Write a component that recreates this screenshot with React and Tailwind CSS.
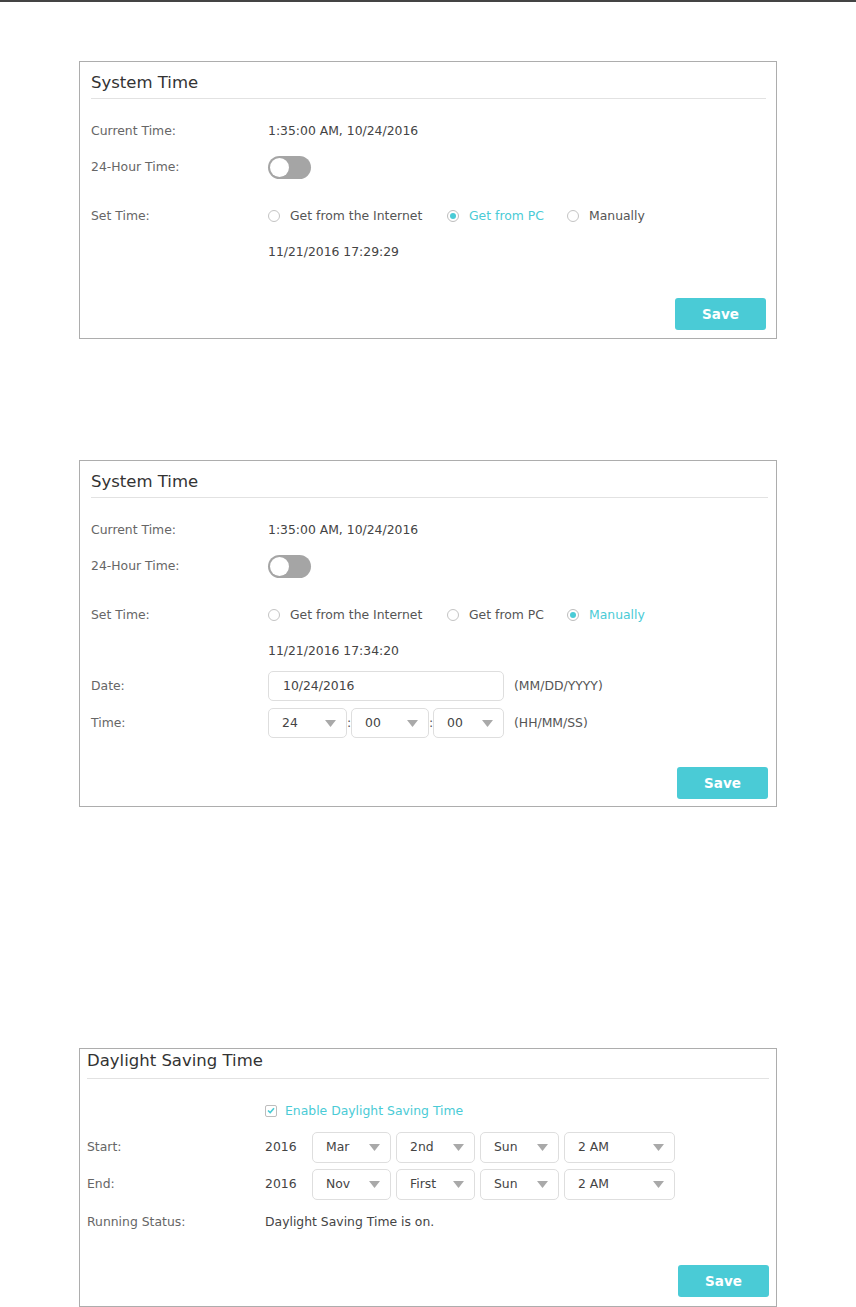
import React from 'react';

const font = { fontFamily: '"DejaVu Sans", Verdana, sans-serif' };

const Toggle = () => (
  <div className="w-[43px] h-[23px] rounded-full bg-[#a5a5a5] flex items-center pl-[2px]">
    <div className="w-[19px] h-[19px] rounded-full bg-white" />
  </div>
);

const Radio = ({ label, checked }) => (
  <div className="flex items-center">
    {checked ? (
      <span className="w-[12px] h-[12px] rounded-full border border-[#bdbdbd] flex items-center justify-center">
        <span className="w-[6px] h-[6px] rounded-full bg-[#4acbd6]" />
      </span>
    ) : (
      <span className="w-[12px] h-[12px] rounded-full border border-[#c4c4c4]" />
    )}
    <span className={`ml-[10px] ${checked ? 'text-[#4acbd6]' : 'text-[#555]'}`}>{label}</span>
  </div>
);

const Caret = () => (
  <svg width="11" height="7" viewBox="0 0 11 7">
    <path d="M0 0 L11 0 L5.5 7 Z" fill="#a9a9a9" />
  </svg>
);

const Select = ({ value, w }) => (
  <div className={`${w} h-full border border-[#dedede] rounded-[5px] flex items-center justify-between pl-[13px] pr-[10px] text-[#444]`}>
    <span>{value}</span>
    <Caret />
  </div>
);

const Row = ({ label, h = 'h-[24px]', mt, children, lw = 'w-[177px]' }) => (
  <div className={`flex items-center ${h} ${mt}`}>
    <div className={`${lw} shrink-0 text-[#666]`}>{label}</div>
    {children}
  </div>
);

const SaveButton = ({ mt }) => (
  <div className={`flex justify-end ${mt}`}>
    <button className="w-[91px] h-[32px] rounded-[3px] bg-[#4acbd6] text-white font-semibold text-[13.5px]">Save</button>
  </div>
);

const Title = ({ text, h, pt }) => (
  <div className={`${h} ${pt} border-b border-[#e2e2e2] text-[16.5px] leading-[24px] text-[#333]`}>{text}</div>
);

const TimeHeader = ({ pcTime, mode }) => (
  <>
    <Title text="System Time" h="h-[37px]" pt="pt-[9px]" />
    <Row label="Current Time:" mt="mt-[20px]">
      <span className="text-[#444]">1:35:00 AM, 10/24/2016</span>
    </Row>
    <Row label="24-Hour Time:" mt="mt-[12px]">
      <Toggle />
    </Row>
    <Row label="Set Time:" mt="mt-[25px]">
      <div className="flex items-center">
        <div className="w-[179px]"><Radio label="Get from the Internet" checked={mode === 'internet'} /></div>
        <div className="w-[120px]"><Radio label="Get from PC" checked={mode === 'pc'} /></div>
        <Radio label="Manually" checked={mode === 'manual'} />
      </div>
    </Row>
    <Row label="" mt="mt-[12px]">
      <span className="text-[#444]">{pcTime}</span>
    </Row>
  </>
);

const Colon = () => <span className="w-[4px] text-center text-[#555]">:</span>;

export default function App() {
  return (
    <div className="min-h-[1307px] bg-white text-[12.4px] border-t-2 border-[#444]" style={font}>
      <div className="ml-[79px] w-[698px]">
        {/* panel 1 */}
        <div className="mt-[59px] border border-[#adadad] pl-[11px] pr-[10px] pb-[8px]">
          <TimeHeader pcTime="11/21/2016 17:29:29" mode="pc" />
          <SaveButton mt="mt-[34px]" />
        </div>

        {/* panel 2 */}
        <div className="mt-[121px] border border-[#adadad] pl-[11px] pr-[8px] pb-[7px]">
          <TimeHeader pcTime="11/21/2016 17:34:20" mode="manual" />
          <Row label="Date:" h="h-[30px]" mt="mt-[8px]">
            <div className="w-[236px] h-full border border-[#dedede] rounded-[5px] flex items-center pl-[14px] text-[#444]">10/24/2016</div>
            <span className="ml-[10px] text-[#555]">(MM/DD/YYYY)</span>
          </Row>
          <Row label="Time:" h="h-[30px]" mt="mt-[7px]">
            <Select value="24" w="w-[79px]" />
            <Colon />
            <Select value="00" w="w-[78px]" />
            <Colon />
            <Select value="00" w="w-[71px]" />
            <span className="ml-[10px] text-[#555]">(HH/MM/SS)</span>
          </Row>
          <SaveButton mt="mt-[29px]" />
        </div>

        {/* panel 3 */}
        <div className="mt-[241px] border border-[#adadad] pl-[7px] pr-[7px] pb-[9px]">
          <Title text="Daylight Saving Time" h="h-[30px]" pt="pt-[0px]" />
          <Row label="" lw="w-[178px]" mt="mt-[20px]">
            <div className="flex items-center">
              <span className="w-[12px] h-[12px] border border-[#bdbdbd] rounded-[2px] flex items-center justify-center">
                <svg width="8" height="7" viewBox="0 0 8 7">
                  <path d="M1 3.5 L3.2 5.6 L7 1.2" stroke="#4acbd6" strokeWidth="1.6" fill="none" />
                </svg>
              </span>
              <span className="ml-[8px] text-[#4acbd6]">Enable Daylight Saving Time</span>
            </div>
          </Row>
          <Row label="Start:" lw="w-[178px]" h="h-[31px]" mt="mt-[9px]">
            <span className="w-[47px] text-[#444]">2016</span>
            <div className="flex h-full gap-[5px]">
              <Select value="Mar" w="w-[79px]" />
              <Select value="2nd" w="w-[79px]" />
              <Select value="Sun" w="w-[79px]" />
              <Select value="2 AM" w="w-[111px]" />
            </div>
          </Row>
          <Row label="End:" lw="w-[178px]" h="h-[31px]" mt="mt-[6px]">
            <span className="w-[47px] text-[#444]">2016</span>
            <div className="flex h-full gap-[5px]">
              <Select value="Nov" w="w-[79px]" />
              <Select value="First" w="w-[79px]" />
              <Select value="Sun" w="w-[79px]" />
              <Select value="2 AM" w="w-[111px]" />
            </div>
          </Row>
          <Row label="Running Status:" lw="w-[178px]" mt="mt-[10px]">
            <span className="text-[#444]">Daylight Saving Time is on.</span>
          </Row>
          <SaveButton mt="mt-[31px]" />
        </div>
      </div>
    </div>
  );
}
